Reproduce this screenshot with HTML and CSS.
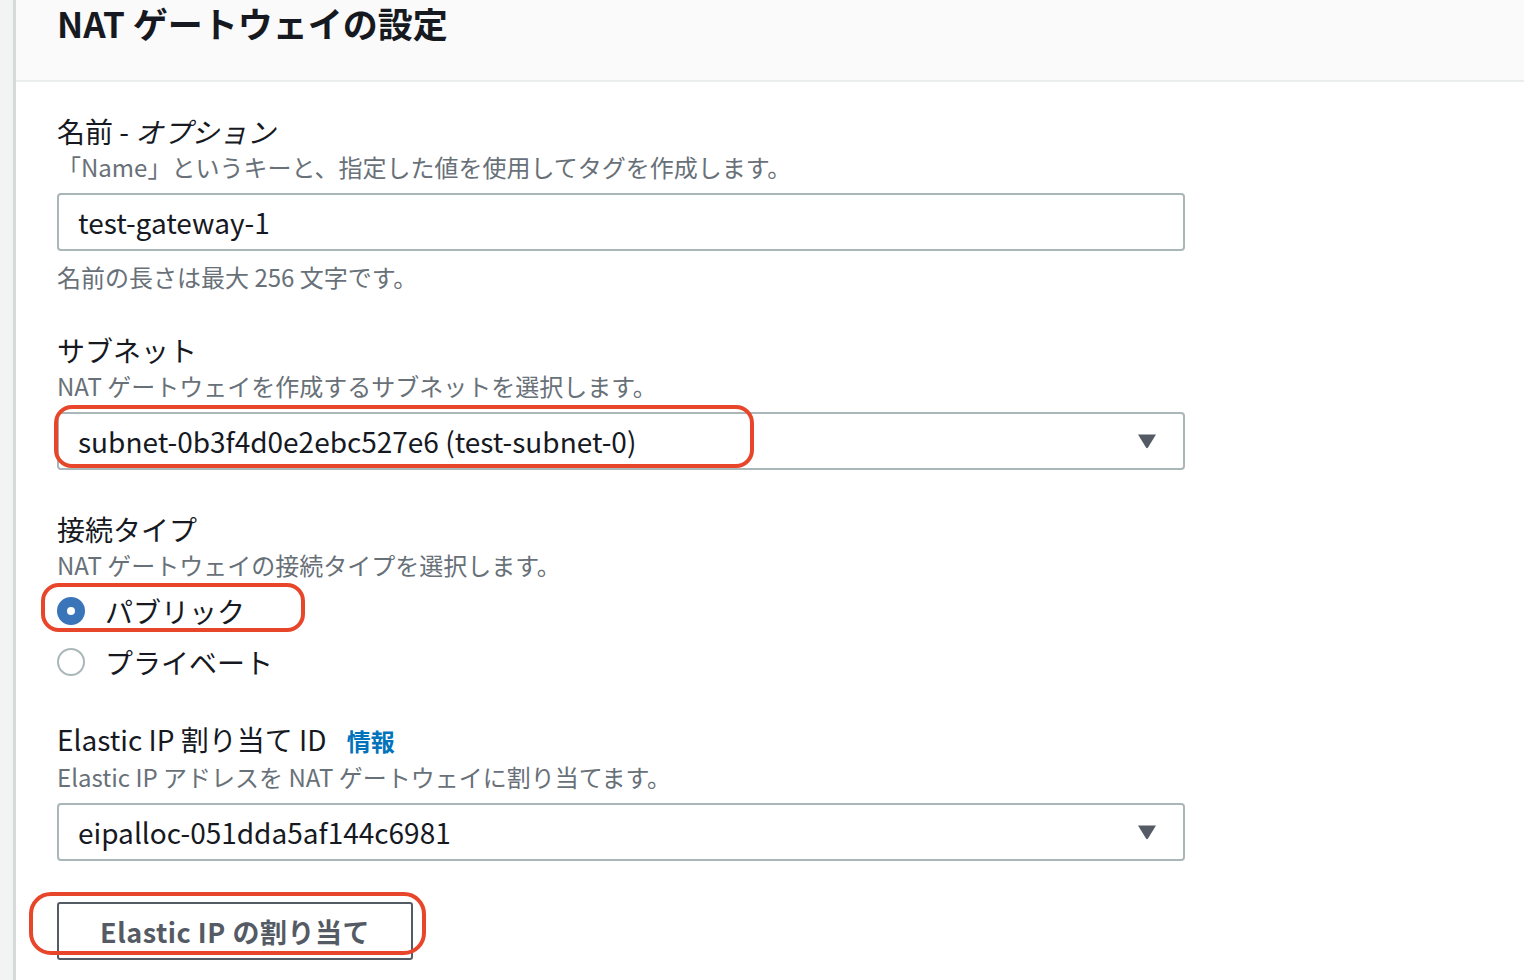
FILE: index.html
```html
<!DOCTYPE html>
<html lang="ja">
<head>
  <meta charset="UTF-8" />
  <meta name="viewport" content="width=device-width, initial-scale=1.0" />
  <title>NAT ゲートウェイの設定</title>
  <link rel="stylesheet" href="styles.css">
</head>
<body>
  <div class="nav-strip"></div>
  <div class="main">
    <div class="header">
      <h2>NAT ゲートウェイの設定</h2>
    </div>
    <div class="content">
      <div class="field">
        <div class="label">名前 - <i>オプション</i></div>
        <div class="desc">「Name」というキーと、指定した値を使用してタグを作成します。</div>
        <div class="control">test-gateway-1</div>
        <div class="desc hint">名前の長さは最大 256 文字です。</div>
      </div>

      <div class="field field-select">
        <div class="label">サブネット</div>
        <div class="desc">NAT ゲートウェイを作成するサブネットを選択します。</div>
        <div class="control select">
          <span>subnet-0b3f4d0e2ebc527e6 (test-subnet-0)</span>
          <svg class="caret" width="20" height="16" viewBox="0 0 20 16"><path d="M1 1.5 H19 L11 14.5 Q10 16 9 14.5 Z" fill="#545b64"/></svg>
          <div class="mark mark-subnet"></div>
        </div>
      </div>

      <div class="field field-radio">
        <div class="label">接続タイプ</div>
        <div class="desc">NAT ゲートウェイの接続タイプを選択します。</div>
        <div class="radio-group">
          <div class="radio-row">
            <span class="radio checked"></span>
            <span>パブリック</span>
            <div class="mark mark-radio"></div>
          </div>
          <div class="radio-row">
            <span class="radio"></span>
            <span>プライベート</span>
          </div>
        </div>
      </div>

      <div class="field field-select">
        <div class="label">Elastic IP 割り当て ID <a class="info" href="#">情報</a></div>
        <div class="desc">Elastic IP アドレスを NAT ゲートウェイに割り当てます。</div>
        <div class="control select">
          <span>eipalloc-051dda5af144c6981</span>
          <svg class="caret" width="20" height="16" viewBox="0 0 20 16"><path d="M1 1.5 H19 L11 14.5 Q10 16 9 14.5 Z" fill="#545b64"/></svg>
        </div>
      </div>

      <div class="btn-wrap">
        <button class="btn">Elastic IP の割り当て</button>
        <div class="mark mark-btn"></div>
      </div>
    </div>
  </div>
</body>
</html>
```

FILE: styles.css
```css
body {
  margin: 0;
  font-family: "Noto Sans CJK JP", "Noto Sans", sans-serif;
  color: #16191f;
  background-color: #fff;
  display: flex;
  height: 100vh;
  overflow: hidden;
}

.nav-strip {
  width: 13px;
  background-color: #f2f3f3;
  border-right: 3px solid #d5dbdb;
}

.main {
  flex: 1;
  display: flex;
  flex-direction: column;
}

.header {
  height: 82px;
  box-sizing: border-box;
  background-color: #fafafa;
  border-bottom: 2px solid #eaeded;
  padding: 2px 0 0 41px;
}

.header h2 {
  margin: 0;
  font-size: 35px;
  line-height: 42px;
  font-weight: bold;
}

.content {
  padding: 31px 0 0 41px;
}

.field {
  margin-bottom: 37px;
}

.field-select {
  margin-bottom: 41px;
}

.field-radio {
  margin-bottom: 34px;
}

.label {
  font-size: 28px;
  line-height: 36px;
}

.label i {
  font-style: italic;
}

.info {
  color: #0073bb;
  font-size: 24px;
  font-weight: bold;
  text-decoration: none;
  margin-left: 14px;
}

.desc {
  font-size: 24px;
  line-height: 36px;
  color: #687078;
}

.hint {
  margin-top: 8px;
}

.control {
  position: relative;
  width: 1128px;
  height: 58px;
  box-sizing: border-box;
  border: 2px solid #aab7b8;
  border-radius: 4px;
  margin-top: 8px;
  padding: 0 19px;
  display: flex;
  align-items: center;
  font-size: 28px;
}

.select {
  justify-content: space-between;
  padding-right: 26px;
}

.radio-group {
  margin-top: 2px;
}

.radio-row {
  position: relative;
  height: 51px;
  display: flex;
  align-items: center;
  gap: 20px;
  font-size: 28px;
}

.radio {
  width: 28px;
  height: 28px;
  box-sizing: border-box;
  border-radius: 50%;
  border: 2px solid #aab7b8;
}

.radio.checked {
  border: 10px solid #3a75ba;
}

.btn-wrap {
  position: relative;
  width: 356px;
}

.btn {
  width: 356px;
  height: 58px;
  background: #fff;
  border: 2px solid #545b64;
  border-radius: 3px;
  color: #545b64;
  font-family: inherit;
  font-size: 27px;
  font-weight: bold;
  letter-spacing: 0.5px;
}

/* red hand-drawn highlight boxes */
.mark {
  position: absolute;
  border: 4px solid #e8462a;
  border-radius: 18px;
  box-sizing: border-box;
  pointer-events: none;
}

.mark-subnet {
  left: -5px;
  top: -9px;
  width: 700px;
  height: 63px;
}

.mark-radio {
  left: -16px;
  top: -2px;
  width: 264px;
  height: 49px;
}

.mark-btn {
  left: -28px;
  top: -10px;
  width: 397px;
  height: 63px;
  border-radius: 22px;
}
```
